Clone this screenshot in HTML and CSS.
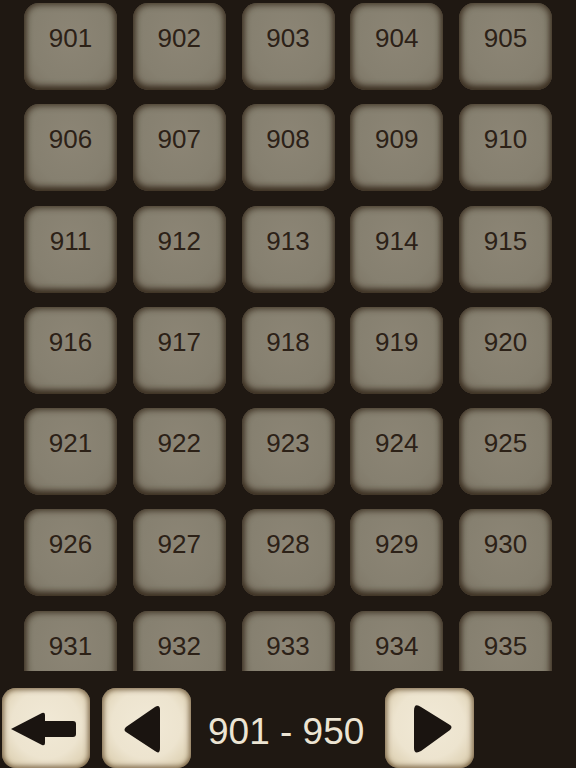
FILE: index.html
```html
<!DOCTYPE html>
<html>
<head>
<meta charset="utf-8">
<link rel="stylesheet" href="styles.css">
</head>
<body>
<div class="page">
  <div class="grid-wrap">
    <div class="grid">
      <div class="tile">901</div><div class="tile">902</div><div class="tile">903</div><div class="tile">904</div><div class="tile">905</div>
      <div class="tile">906</div><div class="tile">907</div><div class="tile">908</div><div class="tile">909</div><div class="tile">910</div>
      <div class="tile">911</div><div class="tile">912</div><div class="tile">913</div><div class="tile">914</div><div class="tile">915</div>
      <div class="tile">916</div><div class="tile">917</div><div class="tile">918</div><div class="tile">919</div><div class="tile">920</div>
      <div class="tile">921</div><div class="tile">922</div><div class="tile">923</div><div class="tile">924</div><div class="tile">925</div>
      <div class="tile">926</div><div class="tile">927</div><div class="tile">928</div><div class="tile">929</div><div class="tile">930</div>
      <div class="tile">931</div><div class="tile">932</div><div class="tile">933</div><div class="tile">934</div><div class="tile">935</div>
    </div>
  </div>
  <div class="bar">
    <div class="btn btn-back">
      <svg width="88" height="80" viewBox="0 0 88 80">
        <path d="M9 41 L40 25 Q43 24 43 27 L43 33 L71 33 Q74 33 74 36 L74 46 Q74 49 71 49 L43 49 L43 55 Q43 58 40 57 Z" fill="#1a1410"/>
      </svg>
    </div>
    <div class="btn btn-prev">
      <svg width="89" height="80" viewBox="0 0 89 80">
        <path d="M24 44 Q21 42 24 39 L53 19 Q58 16 58 22 L58 60 Q58 67 53 63 Z" fill="#1a1410"/>
      </svg>
    </div>
    <div class="range">901 - 950</div>
    <div class="btn btn-next">
      <svg width="89" height="80" viewBox="0 0 89 80">
        <path d="M65 37 Q68 39 65 42 L36 63 Q29 67 29 60 L29 23 Q29 14 36 19 Z" fill="#1a1410"/>
      </svg>
    </div>
  </div>
</div>
</body>
</html>
```
FILE: styles.css
```css
html, body {
  margin: 0;
  padding: 0;
  background: #1f1812;
}
.page {
  width: 576px;
  height: 768px;
  overflow: hidden;
  display: flex;
  flex-direction: column;
  font-family: "Liberation Sans", Arial, sans-serif;
}
.grid-wrap {
  height: 671px;
  overflow: hidden;
  flex: none;
}
.grid {
  display: grid;
  grid-template-columns: repeat(5, 93px);
  column-gap: 15.75px;
  row-gap: 14.3px;
  grid-auto-rows: 87px;
  padding: 3px 24px 0 24px;
}
.tile {
  border-radius: 15px;
  background: radial-gradient(ellipse at 50% 40%, #8c8575 0%, #868070 60%, #7a7262 100%);
  box-shadow: inset 0 0 6px 2px rgba(50, 36, 22, 0.75), inset 0 -4px 6px rgba(40, 28, 16, 0.6);
  color: #2c2117;
  font-size: 26px;
  line-height: 26px;
  text-align: center;
  padding-top: 22px;
  box-sizing: border-box;
}
.bar {
  display: flex;
  align-items: flex-start;
  padding-top: 17px;
  padding-left: 2px;
}
.btn {
  height: 80px;
  border-radius: 14px;
  background: radial-gradient(ellipse at 50% 45%, #f1e9d6 0%, #ede4cf 55%, #ddd0b2 85%, #a8946e 100%);
  box-shadow: inset 0 0 5px 2px rgba(90, 66, 36, 0.7);
  flex: none;
}
.btn svg {
  display: block;
}
.btn-back {
  width: 88px;
}
.btn-prev {
  width: 89px;
  margin-left: 12px;
}
.btn-next {
  width: 89px;
}
.range {
  color: #ece4d3;
  font-size: 37px;
  line-height: 80px;
  padding-top: 4px;
  margin-left: 17px;
  width: 177px;
  white-space: nowrap;
}
```
